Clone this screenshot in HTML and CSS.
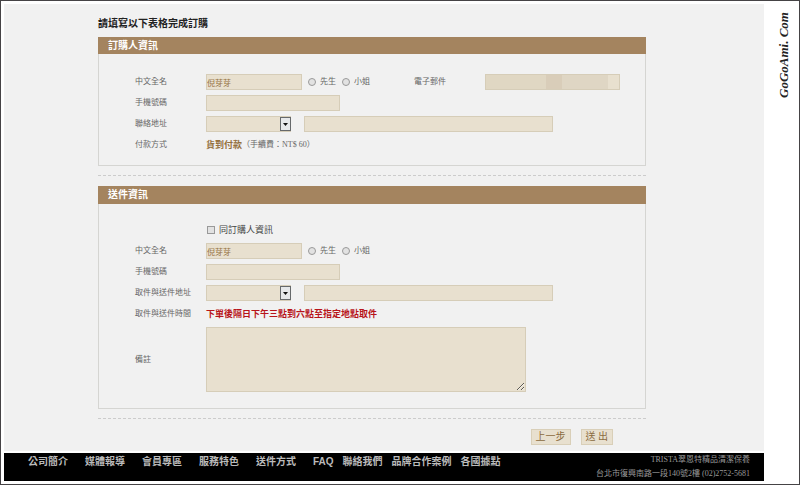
FILE: index.html
```html
<!DOCTYPE html>
<html lang="zh-Hant">
<head>
    <meta charset="UTF-8">
    <meta name="viewport" content="width=device-width, initial-scale=1.0">
    <title>TRISTA - 訂購表格</title>
    <link rel="stylesheet" href="styles.css">
</head>
<body>

<div class="page">
    <main>
        <form class="order">
            <h1>請填寫以下表格完成訂購</h1>

            <!-- 訂購人 -->
            <section class="panel">
                <h2>訂購人資訊</h2>
                <div class="panel-body">
                    <div class="row">
                        <label for="buyer-name">中文全名</label>
                        <input type="text" class="name" id="buyer-name" value="倪芽芽">
                        <label class="choice"><input type="radio" name="buyer-title">先生</label>
                        <label class="choice"><input type="radio" name="buyer-title">小姐</label>
                        <label class="email-label" for="buyer-email">電子郵件</label>
                        <input type="email" class="email" id="buyer-email">
                    </div>
                    <div class="row">
                        <label for="buyer-phone">手機號碼</label>
                        <input type="tel" class="phone" id="buyer-phone">
                    </div>
                    <div class="row">
                        <label for="buyer-city">聯絡地址</label>
                        <span class="select">
                            <select id="buyer-city"><option></option></select>
                            <svg viewBox="0 0 11 14" width="11" height="14"><rect x="0.5" y="0.5" width="10" height="13" fill="#e6e8ea" stroke="#66696b"/><path d="M3 6h5L5.500 9z" fill="#111"/></svg>
                        </span>
                        <input type="text" class="address" aria-label="聯絡地址">
                    </div>
                    <div class="row">
                        <span class="caption">付款方式</span>
                        <strong class="pay">貨到付款</strong>
                        <span class="fee">（手續費：NT$ 60）</span>
                    </div>
                </div>
            </section>

            <hr>

            <!-- 送件 -->
            <section class="panel delivery">
                <h2>送件資訊</h2>
                <div class="panel-body">
                    <div class="row">
                        <span class="caption"></span>
                        <label class="same"><input type="checkbox">同訂購人資訊</label>
                    </div>
                    <div class="row">
                        <label for="send-name">中文全名</label>
                        <input type="text" class="name" id="send-name" value="倪芽芽">
                        <label class="choice"><input type="radio" name="send-title">先生</label>
                        <label class="choice"><input type="radio" name="send-title">小姐</label>
                    </div>
                    <div class="row">
                        <label for="send-phone">手機號碼</label>
                        <input type="tel" class="phone" id="send-phone">
                    </div>
                    <div class="row">
                        <label for="send-city">取件與送件地址</label>
                        <span class="select">
                            <select id="send-city"><option></option></select>
                            <svg viewBox="0 0 11 14" width="11" height="14"><rect x="0.5" y="0.5" width="10" height="13" fill="#e6e8ea" stroke="#66696b"/><path d="M3 6h5L5.500 9z" fill="#111"/></svg>
                        </span>
                        <input type="text" class="address" aria-label="取件與送件地址">
                    </div>
                    <div class="row">
                        <span class="caption">取件與送件時間</span>
                        <strong class="notice">下單後隔日下午三點到六點至指定地點取件</strong>
                    </div>
                    <div class="row">
                        <label for="memo">備註</label>
                        <textarea id="memo"></textarea>
                    </div>
                </div>
            </section>

            <hr>

            <div class="buttons">
                <button type="button">上一步</button>
                <button type="submit">送 出</button>
            </div>
        </form>
    </main>

    <footer>
        <nav>
            <a href="#">公司簡介</a>
            <a href="#">媒體報導</a>
            <a href="#">會員專區</a>
            <a href="#">服務特色</a>
            <a href="#">送件方式</a>
            <span class="nav-more">
                <a href="#">FAQ</a>
                <a href="#">聯絡我們</a>
                <a href="#">品牌合作案例</a>
                <a href="#">各國據點</a>
            </span>
        </nav>
        <address>
            <p>TRISTA翠恩特精品清潔保養</p>
            <p>台北市復興南路一段140號2樓 (02)2752-5681</p>
        </address>
    </footer>
</div>

<aside>GoGoAmi. Com</aside>

</body>
</html>
```
FILE: styles.css
```css
* {
    margin: 0;
    padding: 0;
    box-sizing: border-box;
}

body {
    display: flex;
    min-height: 100vh;
    padding: 3px;
    border: 1px solid #454345;
    background-color: #fff;
    color: #666;
    font-family: "Liberation Serif", "Noto Sans CJK TC", serif;
    font-size: 8px;
    line-height: 16px;
}

.page {
    flex: 1;
    display: flex;
    flex-direction: column;
}

main {
    flex: 1;
    padding: 12px 0 6px 94px;
    margin-bottom: 2px;
    background-color: #f1f1f1;
}

.order {
    width: 548px;
    max-width: 100%;
}

h1 {
    margin-bottom: 5px;
    color: #222;
    font-size: 10px;
    line-height: 16px;
}

/* 表格區塊 */
.panel {
    border: 1px solid #d5d5d2;
    border-top: none;
}

.panel h2 {
    margin: 0 -1px;
    padding-left: 10px;
    background-color: #a4845f;
    color: #fff;
    font-size: 10px;
    line-height: 17px;
}

.panel-body {
    display: flex;
    flex-direction: column;
    gap: 5px;
    padding: 20px 25px 12px 36px;
}

.delivery h2 {
    line-height: 18px;
}

.delivery .panel-body {
    padding-top: 18px;
    padding-bottom: 16px;
}

.row {
    display: flex;
    align-items: center;
    min-height: 16px;
}

.row > label:first-child,
.caption {
    width: 71px;
}

input,
select,
textarea {
    font: inherit;
    color: #94703f;
}

input[type="text"],
input[type="tel"],
input[type="email"],
select,
textarea {
    height: 16px;
    border: 1px solid #d6cdb8;
    border-radius: 0;
    background-color: #e8e0cf;
    line-height: 14px;
}

.name {
    width: 96px;
    margin-right: 6px;
}

.phone {
    width: 134px;
}

.address {
    width: 249px;
}

.row textarea {
    display: block;
    width: 320px;
    height: 65px;
}

.row .email-label {
    width: 71px;
    margin-left: 38px;
}

.row .email {
    width: 135px;
    background-image: linear-gradient(to right, #e0d7c3 60px, #d9cdb9 60px, #d9cdb9 76px, #dfd6c4 76px, #dfd6c4 122px, #e8e0cf 122px);
}

.choice,
.same {
    display: flex;
    align-items: center;
}

.choice {
    margin-right: 6px;
}

.choice input,
.same input {
    appearance: none;
    width: 8px;
    height: 8px;
    margin-right: 4px;
    border: 1px solid #999;
    background-color: #e2e2e2;
}

.choice input {
    border-radius: 50%;
}

.choice input:checked,
.same input:checked {
    background-color: #a4845f;
}

.same {
    padding-left: 1px;
    color: #444;
    font-size: 9px;
}

.select {
    position: relative;
    display: flex;
    margin-right: 13px;
}

.select select {
    appearance: none;
    width: 85px;
}

.select svg {
    position: absolute;
    top: 1px;
    right: 0;
    pointer-events: none;
}

.pay {
    color: #94703f;
    font-size: 9px;
}

.notice {
    color: #b8141a;
    font-size: 9px;
}

hr {
    margin: 9px 0 10px;
    border: none;
    border-top: 1px dashed #ccc;
}

.buttons {
    display: flex;
    justify-content: flex-end;
    gap: 10px;
    padding-right: 33px;
}

.buttons button {
    height: 16px;
    padding: 0 4px;
    border: 1px solid #d9cfb8;
    background-color: #e8e0cf;
    color: #8a6a40;
    font: inherit;
    font-size: 10px;
    line-height: 14px;
}

/* 頁尾 */
footer {
    display: flex;
    justify-content: space-between;
    padding: 0 14px 0 24px;
    background-color: #000;
}

nav,
.nav-more {
    display: flex;
    gap: 17px;
}

.nav-more {
    gap: 9px;
}

nav a {
    color: #bbb;
    font-family: "Liberation Sans", "Noto Sans CJK TC", sans-serif;
    font-size: 10px;
    font-weight: bold;
    line-height: 18px;
    text-decoration: none;
}

address {
    color: #999;
    font-style: normal;
    line-height: 14px;
    text-align: right;
}

/* 側邊直式網址 */
aside {
    width: 32px;
    padding: 0 12px 8px 0;
    color: #222;
    font-family: "Liberation Serif", cursive;
    font-size: 13px;
    font-style: italic;
    font-weight: bold;
    line-height: 16px;
    text-align: right;
    writing-mode: vertical-rl;
    transform: rotate(180deg);
}
```
